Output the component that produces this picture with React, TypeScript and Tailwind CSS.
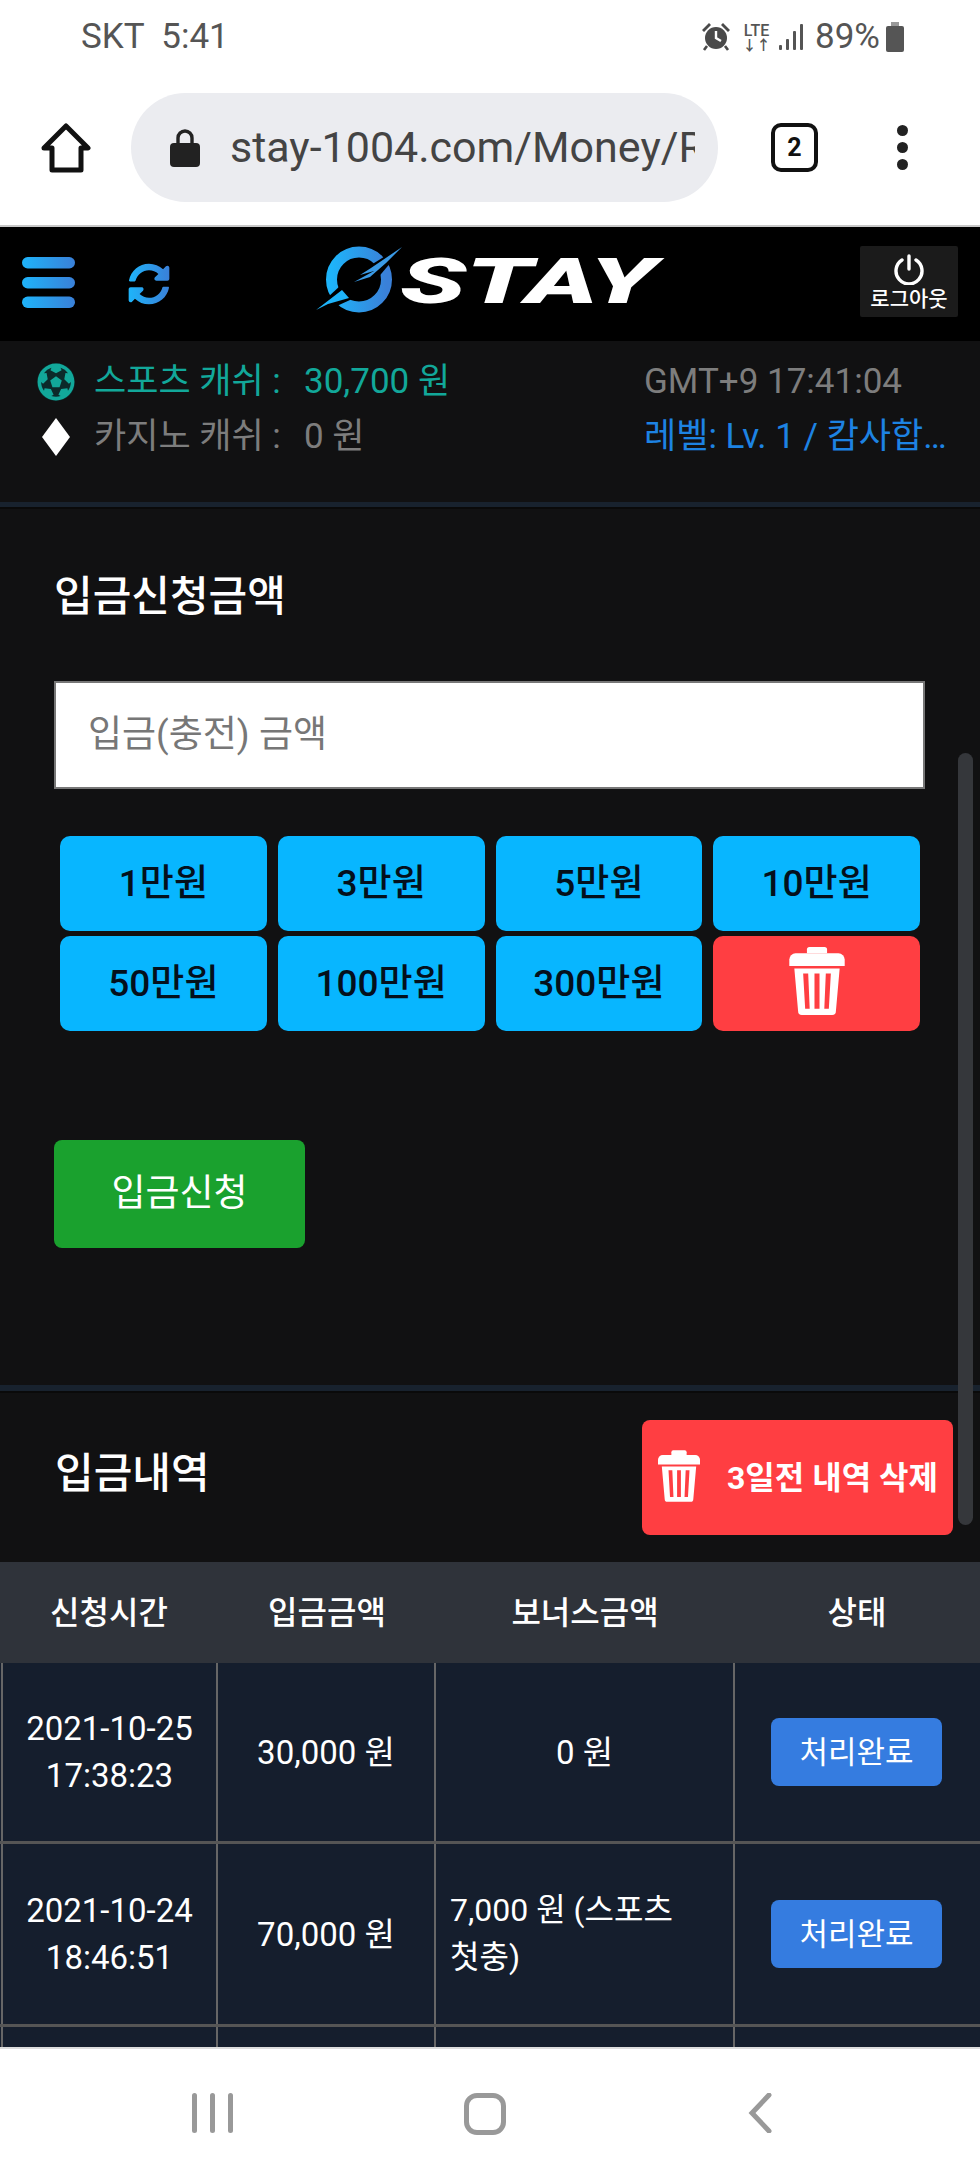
import React from "react";
import { FaFutbol } from "react-icons/fa";

const Trash = ({ className }: { className?: string }) => (
  <svg viewBox="0 0 44 54" className={className} fill="#fff">
    <path d="M16 0h12a2 2 0 0 1 2 2v3h-16V2a2 2 0 0 1 2-2z" />
    <path d="M5 5h34a5 5 0 0 1 5 5v5H0v-5a5 5 0 0 1 5-5z" />
    <path fillRule="evenodd" d="M4 17h36l-3 34a3 3 0 0 1-3 3H10a3 3 0 0 1-3-3L4 17zm7 4 1.6 28h3.6L15 21h-4zm9 0v28h4V21h-4zm9 0-1.2 28h3.6L33 21h-4z" />
  </svg>
);

const Logo = () => (
  <svg viewBox="0 0 345 67" className="h-[67px] w-[345px] overflow-visible">
    <defs>
      <linearGradient id="lg1" x1="0" y1="0" x2="1" y2="0">
        <stop offset="0" stopColor="#1eb4fa" />
        <stop offset="1" stopColor="#3a80d8" />
      </linearGradient>
    </defs>
    <circle cx="43" cy="33.5" r="27.5" fill="none" stroke="url(#lg1)" strokeWidth="11" />
    <polygon points="92,-4 50,22 26,38 -6,68 12,64 34,54 60,34" fill="#000" />
    <polygon points="86,1 55,22 44,29 58,25 38,36 54,31 70,17" fill="#3a9ae6" />
    <polygon points="0,64 26,44 33,52 12,58" fill="#1eb4fa" />
    <text
      x="84"
      y="57"
      textLength="256"
      lengthAdjust="spacingAndGlyphs"
      fontFamily="Roboto, sans-serif"
      fontWeight="900"
      fontStyle="italic"
      fontSize="63"
      fill="#fff"
    >
      STAY
    </text>
  </svg>
);

const AmountButton = ({ label }: { label: string }) => (
  <div className="flex h-[95px] items-center justify-center rounded-[10px] bg-[#08b6ff] text-[37px] font-medium text-[#04101c]">
    {label}
  </div>
);

const Row = ({
  date,
  time,
  amount,
  bonus,
  left,
  first,
}: {
  date?: string;
  time?: string;
  amount?: string;
  bonus?: React.ReactNode;
  left?: boolean;
  first?: boolean;
}) => {
  const cell = "flex items-center justify-center border-l-2 border-[#666] text-center";
  return (
    <div
      className={`grid shrink-0 grid-cols-[215px_218px_299px_247px] border-b-[3px] border-[#555] pl-[1px] text-[33px] leading-[47px] text-white ${
        first ? "h-[181px]" : "h-[183px]"
      }`}
    >
      <div className={cell}>
        <div>
          {date}
          <br />
          {time}
        </div>
      </div>
      <div className={cell}>{amount}</div>
      <div className={`${cell} ${left ? "justify-start pl-[14px] text-left text-[32px]" : ""}`}>{bonus}</div>
      <div className={cell}>
        {date && (
          <div className="mr-[2px] flex h-[68px] w-[171px] items-center justify-center rounded-[8px] bg-[#357ce0] text-[31px]">
            처리완료
          </div>
        )}
      </div>
    </div>
  );
};

export default function App() {
  return (
    <div className="relative flex h-[2177px] w-[980px] flex-col overflow-hidden bg-white font-[Roboto,'Noto_Sans_CJK_KR',sans-serif]">
      {/* status + browser chrome */}
      <div className="flex h-[225px] shrink-0 flex-col">
        <div className="flex h-[93px] items-start justify-between pl-[81px] pr-[76px] pt-[17px] text-[35px] leading-[40px] text-[#555]">
          <span className="whitespace-pre">SKT  5:41</span>
          <div className="flex items-center">
            <svg viewBox="0 0 30 30" className="h-[30px] w-[30px]" fill="#4a4a4a">
              <circle cx="15" cy="16" r="11" />
              <path d="M15 9v7l5 3" fill="none" stroke="#fff" strokeWidth="2.4" />
              <path d="M1 8 8 1l2 2-7 7zM29 8l-7-7-2 2 7 7z" />
              <path d="M6 24l-3 4M24 24l3 4" stroke="#4a4a4a" strokeWidth="2.6" />
            </svg>
            <div className="ml-[12px] flex w-[27px] flex-col items-center text-[16px] font-medium leading-[15px]">
              <span>LTE</span>
              <span className="text-[14px] font-bold leading-[14px]">↓↑</span>
            </div>
            <svg viewBox="0 0 26 28" className="ml-[9px] h-[28px] w-[26px]" fill="#555">
              <rect x="0" y="22" width="3" height="5" rx="1" />
              <rect x="7" y="16" width="3" height="11" rx="1" />
              <rect x="14" y="8" width="3" height="19" rx="1" />
              <rect x="21" y="1" width="3" height="26" rx="1" />
            </svg>
            <span className="ml-[10px]">89%</span>
            <svg viewBox="0 0 18 30" className="ml-[6px] h-[30px] w-[18px]" fill="#555">
              <rect x="5" y="0" width="8" height="4" fill="#999" />
              <rect x="0" y="4" width="18" height="26" rx="2" />
            </svg>
          </div>
        </div>
        <div className="flex items-center">
          <svg viewBox="0 0 50 50" className="ml-[41px] h-[50px] w-[50px]" fill="none" stroke="#111" strokeWidth="5" strokeLinejoin="round">
            <path d="M25 3 47 25h-7v22H11V25H3z" />
          </svg>
          <div className="ml-[40px] flex h-[109px] w-[587px] items-center rounded-full bg-[#ebecf0] pl-[39px]">
            <svg viewBox="0 0 30 38" className="h-[38px] w-[30px]" fill="#222">
              <path d="M8 16V9a7 7 0 0 1 14 0v7" fill="none" stroke="#222" strokeWidth="3.4" />
              <rect x="0" y="14" width="30" height="24" rx="4" />
            </svg>
            <div className="ml-[30px] w-[465px] overflow-hidden whitespace-nowrap text-[43px] text-[#444]">
              stay-1004.com/Money/Refund
            </div>
          </div>
          <div className="ml-[53px] flex h-[49px] w-[47px] items-center justify-center rounded-[10px] border-[4px] border-[#111] text-[25px] font-bold text-[#111]">
            2
          </div>
          <div className="ml-[79px] flex flex-col gap-[6px]">
            <div className="h-[11px] w-[11px] rounded-full bg-[#222]" />
            <div className="h-[11px] w-[11px] rounded-full bg-[#222]" />
            <div className="h-[11px] w-[11px] rounded-full bg-[#222]" />
          </div>
        </div>
      </div>
      <div className="h-[2px] shrink-0 bg-[#c8c8c8]" />

      {/* site header */}
      <div className="flex h-[114px] shrink-0 items-center bg-black pl-[22px] pr-[22px]">
        <svg viewBox="0 0 53 51" className="mb-[3px] h-[51px] w-[53px]">
          <defs>
            <linearGradient id="hb" x1="0" y1="0" x2="1" y2="0">
              <stop offset="0" stopColor="#1eb4fa" />
              <stop offset="1" stopColor="#3a80d8" />
            </linearGradient>
          </defs>
          <rect x="0" y="0" width="53" height="11.5" rx="5.7" fill="url(#hb)" />
          <rect x="0" y="20" width="53" height="11.5" rx="5.7" fill="url(#hb)" />
          <rect x="0" y="39.5" width="53" height="11.5" rx="5.7" fill="url(#hb)" />
        </svg>
        <svg viewBox="0 0 512 512" className="ml-[53px] h-[42px] w-[42px]">
          <defs>
            <linearGradient id="rf" x1="0" y1="0" x2="1" y2="0">
              <stop offset="0" stopColor="#1eb4fa" />
              <stop offset="1" stopColor="#3a80d8" />
            </linearGradient>
          </defs>
          <path
            fill="url(#rf)"
            d="M370.72 133.28C339.458 104.008 298.888 87.962 255.848 88c-77.458.068-144.328 53.178-162.791 126.85-1.344 5.363-6.122 9.15-11.651 9.15H24.103c-7.498 0-13.194-6.807-11.807-14.176C33.933 94.924 134.813 8 256 8c66.448 0 126.791 26.136 171.315 68.685L463.03 40.97C478.149 25.851 504 36.559 504 57.941V192c0 13.255-10.745 24-24 24H345.941c-21.382 0-32.09-25.851-16.971-40.971l41.75-41.749zM32 296h134.059c21.382 0 32.09 25.851 16.971 40.971l-41.75 41.75c31.262 29.273 71.835 45.319 114.876 45.28 77.418-.07 144.315-53.144 162.787-126.849 1.344-5.363 6.122-9.15 11.651-9.15h57.304c7.498 0 13.194 6.807 11.807 14.176C478.067 417.076 377.187 504 256 504c-66.448 0-126.791-26.136-171.315-68.685L48.97 471.03C33.851 486.149 8 475.441 8 454.059V320c0-13.255 10.745-24 24-24z"
          />
        </svg>
        <div className="mb-[10px] ml-[146px]">
          <Logo />
        </div>
        <div className="mb-[6px] ml-auto flex h-[71px] w-[98px] flex-col items-center justify-center rounded-[2px] bg-[#1b1b1b] pt-[2px]">
          <svg viewBox="0 0 32 32" className="h-[32px] w-[32px]" fill="none" stroke="#fff" strokeWidth="3.4" strokeLinecap="round">
            <path d="M16 3v13" />
            <path d="M9 7a13 13 0 1 0 14 0" />
          </svg>
          <span className="mt-[2px] text-[21px] font-medium leading-[24px] text-white">로그아웃</span>
        </div>
      </div>

      {/* cash info */}
      <div className="flex h-[161px] shrink-0 justify-between bg-[#111112] pl-[37px] pt-[13px] text-[35px] leading-[55px]">
        <div>
          <div className="flex items-center text-[#12a89a]">
            <span className="flex h-[38px] w-[38px] items-center justify-center rounded-full bg-[#0c2a2a]">
              <FaFutbol className="h-[38px] w-[38px] text-[#12a89a]" />
            </span>
            <span className="ml-[19px] w-[210px]">스포츠 캐쉬 :</span>
            <span>30,700 원</span>
          </div>
          <div className="flex items-center text-[#7d7d7d]">
            <svg viewBox="0 0 28 38" className="ml-[5px] h-[38px] w-[28px]" fill="#fff">
              <path d="M14 0 28 19 14 38 0 19z" />
            </svg>
            <span className="ml-[24px] w-[210px]">카지노 캐쉬 :</span>
            <span>0 원</span>
          </div>
        </div>
        <div className="w-[336px]">
          <div className="text-[#7d7d7d]">GMT+9 17:41:04</div>
          <div className="w-[308px] overflow-hidden text-ellipsis whitespace-nowrap text-[#1d83e3]">
            레벨: Lv. 1 / 캄사합니다
          </div>
        </div>
      </div>
      <div className="h-[7px] shrink-0 border-b-2 border-[#0a0a0a] bg-[#18222e]" />

      {/* deposit form */}
      <div className="flex h-[876px] shrink-0 flex-col bg-[#111112] pl-[54px]">
        <div className="mt-[63px] text-[42px] font-medium leading-[50px] text-white">입금신청금액</div>
        <div className="mt-[59px] flex h-[108px] w-[871px] items-center border-2 border-[#777] bg-white pl-[32px] text-[37px] text-[#777]">
          입금(충전) 금액
        </div>
        <div className="ml-[6px] mt-[47px] grid w-[860px] grid-cols-4 gap-x-[11px] gap-y-[5px]">
          {["1만원", "3만원", "5만원", "10만원", "50만원", "100만원", "300만원"].map((l) => (
            <AmountButton key={l} label={l} />
          ))}
          <div className="flex h-[95px] items-center justify-center rounded-[10px] bg-[#ff3e42]">
            <Trash className="mb-[5px] h-[68px] w-[56px]" />
          </div>
        </div>
        <div className="mt-[109px] flex h-[108px] w-[251px] items-center justify-center rounded-[8px] bg-[#1aa12e] text-[37px] text-white">
          입금신청
        </div>
      </div>
      <div className="h-[8px] shrink-0 border-b-2 border-[#0a0a0a] bg-[#18222e]" />

      {/* history */}
      <div className="flex h-[169px] shrink-0 items-start justify-between bg-[#111112] pl-[55px] pr-[27px]">
        <div className="mt-[54px] text-[42px] font-medium leading-[54px] text-white">입금내역</div>
        <div className="mt-[27px] flex h-[115px] w-[311px] items-center rounded-[8px] bg-[#ff3e42] pl-[16px]">
          <Trash className="mb-[3px] h-[52px] w-[42px]" />
          <span className="ml-[27px] whitespace-nowrap text-[32px] font-bold text-white">3일전 내역 삭제</span>
        </div>
      </div>

      {/* table */}
      <div className="flex h-[485px] shrink-0 flex-col overflow-hidden bg-[#151e2d]">
        <div className="grid h-[101px] shrink-0 grid-cols-[218px_218px_298px_246px] items-center bg-[#2f333a] text-center text-[32px] font-medium text-white">
          <div>신청시간</div>
          <div>입금금액</div>
          <div>보너스금액</div>
          <div>상태</div>
        </div>
        <Row first date="2021-10-25" time="17:38:23" amount="30,000 원" bonus="0 원" />
        <Row
          date="2021-10-24"
          time="18:46:51"
          amount="70,000 원"
          left
          bonus={
            <span>
              7,000 원 (스포츠
              <br />
              첫충)
            </span>
          }
        />
        <Row />
      </div>

      {/* android nav */}
      <div className="flex flex-1 items-start border-t-2 border-[#ddd] bg-white pt-[44px]">
        <div className="ml-[192px] flex gap-[13px]">
          <div className="h-[40px] w-[5px] rounded bg-[#999]" />
          <div className="h-[40px] w-[5px] rounded bg-[#999]" />
          <div className="h-[40px] w-[5px] rounded bg-[#999]" />
        </div>
        <div className="ml-[231px] h-[42px] w-[42px] rounded-[13px] border-[5px] border-[#999]" />
        <svg viewBox="0 0 24 40" className="ml-[242px] h-[40px] w-[24px]" fill="none" stroke="#999" strokeWidth="5" strokeLinecap="round">
          <path d="M21 2 4 20l17 18" />
        </svg>
      </div>

      {/* overlay scrollbar */}
      <div className="absolute left-[958px] top-[753px] h-[772px] w-[15px] rounded-full bg-[#35373b]" />
    </div>
  );
}
